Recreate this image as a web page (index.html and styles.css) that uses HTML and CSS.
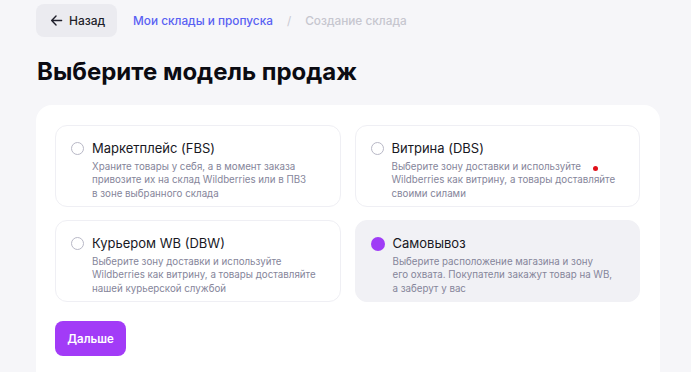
FILE: index.html
```html
<!DOCTYPE html>
<html lang="ru">
<head>
<meta charset="utf-8">
<title>Выберите модель продаж</title>
<link rel="stylesheet" href="styles.css">
</head>
<body>
<div class="page">
  <div class="topbar">
    <button class="back">
      <svg class="back-icon" width="13" height="13" viewBox="0 0 14 14" fill="none" stroke="#1f1f2b" stroke-width="1.5" stroke-linecap="round" stroke-linejoin="round"><path d="M12.5 7H1.8M6.5 2.2L1.8 7l4.7 4.8"/></svg>
      <span>Назад</span>
    </button>
    <nav class="crumbs">
      <a class="crumb-link">Мои склады и пропуска</a>
      <span class="crumb-sep">/</span>
      <span class="crumb-current">Создание склада</span>
    </nav>
  </div>
  <h1 class="title">Выберите модель продаж</h1>
  <div class="panel">
    <div class="grid">
      <div class="card">
        <span class="radio"></span>
        <div class="card-body">
          <div class="card-title">Маркетплейс (FBS)</div>
          <div class="card-desc">Храните товары у себя, а в момент заказа<br>привозите их на склад Wildberries или в ПВЗ<br>в зоне выбранного склада</div>
        </div>
      </div>
      <div class="card">
        <span class="radio"></span>
        <div class="card-body">
          <div class="card-title">Витрина (DBS)</div>
          <div class="card-desc">Выберите зону доставки и используйте<br>Wildberries как витрину, а товары доставляйте<br>своими силами</div>
        </div>
      </div>
      <div class="card">
        <span class="radio"></span>
        <div class="card-body">
          <div class="card-title">Курьером WB (DBW)</div>
          <div class="card-desc">Выберите зону доставки и используйте<br>Wildberries как витрину, а товары доставляйте<br>нашей курьерской службой</div>
        </div>
      </div>
      <div class="card card-selected">
        <span class="radio radio-on"></span>
        <div class="card-body">
          <div class="card-title">Самовывоз</div>
          <div class="card-desc">Выберите расположение магазина и зону<br>его охвата. Покупатели закажут товар на WB,<br>а заберут у вас</div>
        </div>
      </div>
    </div>
    <button class="next">Дальше</button>
    <span class="cursor-dot"></span>
  </div>
</div>
</body>
</html>
```
FILE: styles.css
```css
html, body {
  margin: 0;
  padding: 0;
  background: #f6f6f9;
  font-family: Inter, "Noto Sans", "Liberation Sans", sans-serif;
  color: #1f1f2b;
  overflow: hidden;
}
.page {
  padding: 4px 31px 0 36px;
}
.topbar {
  display: flex;
  align-items: center;
  gap: 16px;
}
.back {
  display: flex;
  align-items: center;
  gap: 6px;
  height: 33px;
  width: 81px;
  padding: 0 0 0 14px;
  border: none;
  border-radius: 8px;
  background: #ebebf0;
  font-family: inherit;
  font-size: 12px;
  font-weight: 500;
  color: #1f1f2b;
}
.back-icon { display: block; }
.crumbs {
  display: flex;
  align-items: center;
  gap: 14px;
  font-size: 11.8px;
  font-weight: 500;
}
.crumb-link { color: #5961f3; }
.crumb-sep { color: #c9c9d2; font-weight: 400; }
.crumb-current { color: #c6c6cf; }
.title {
  margin: 19px 0 17px 1px;
  font-size: 24px;
  line-height: 32px;
  font-weight: 700;
  color: #0b0b12;
}
.panel {
  position: relative;
  width: 624px;
  height: 267px;
  box-sizing: border-box;
  padding: 20px 20px 0 19px;
  background: #ffffff;
  border-radius: 16px 16px 0 0;
}
.grid {
  display: grid;
  grid-template-columns: 1fr 1fr;
  column-gap: 14px;
  row-gap: 13px;
}
.card {
  display: flex;
  align-items: flex-start;
  gap: 8px;
  height: 82px;
  box-sizing: border-box;
  padding: 12px 10px 0 15px;
  border: 1px solid #efeff4;
  border-radius: 12px;
  background: #ffffff;
}
.card-selected {
  background: #f1f1f5;
  border-color: #f1f1f5;
}
.radio {
  flex: none;
  width: 13px;
  height: 13px;
  margin-top: 4px;
  box-sizing: border-box;
  border: 1.5px solid #b8b8c6;
  border-radius: 50%;
}
.radio-on {
  border: none;
  background: #9f3cf6;
  width: 14px;
  height: 14px;
  margin-top: 3.5px;
}
.card-title {
  font-size: 13px;
  line-height: 20px;
  font-weight: 400;
  color: #18181f;
}
.card-desc {
  margin-top: 2px;
  font-size: 9.75px;
  line-height: 13.3px;
  color: #85859a;
}
.next {
  margin-top: 19px;
  width: 71px;
  height: 35px;
  border: none;
  border-radius: 8px;
  background: #a23bf7;
  color: #ffffff;
  font-family: inherit;
  font-size: 11.5px;
  font-weight: 600;
}
.cursor-dot {
  position: absolute;
  left: 557px;
  top: 61px;
  width: 5px;
  height: 5px;
  border-radius: 50%;
  background: #e0101a;
}
```
